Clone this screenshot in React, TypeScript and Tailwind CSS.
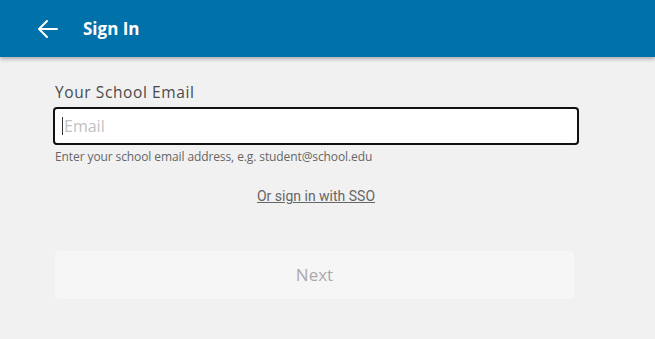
import React from 'react';

const App: React.FC = () => {
  return (
    <div className="w-[655px] h-[339px] bg-[#f1f1f1] overflow-hidden" style={{ fontFamily: '"Open Sans", "Noto Sans", sans-serif' }}>
      {/* Top bar */}
      <div className="h-[57px] bg-[#0071a9] flex items-center shadow-[0_2px_4px_rgba(0,0,0,0.3)] relative z-10">
        <button className="ml-[37px] w-[22px] h-[22px] flex items-center justify-center text-white">
          <svg width="22" height="20" viewBox="0 0 22 20" fill="none" stroke="white" strokeWidth="2" strokeLinecap="round" strokeLinejoin="round">
            <path d="M20 10H3" />
            <path d="M10 2L2 10l8 8" />
          </svg>
        </button>
        <h1 className="ml-[24px] text-white text-[17px] font-bold">Sign In</h1>
      </div>

      {/* Form */}
      <div className="w-[526px] ml-[53px] pt-[26px]">
        <label className="block pl-[2px] text-[15.5px] tracking-[0.6px] text-[#4a4a4a] leading-[18px]">Your School Email</label>
        <div className="mt-[6px] h-[38px] bg-white border-2 border-[#111] rounded-[4px] flex items-center pl-[7px]">
          <span className="w-px h-[18px] bg-[#333]" />
          <input
            className="flex-1 bg-transparent outline-none text-[16px] text-[#333] placeholder-[#c2c2c2] pl-[1px]"
            placeholder="Email"
          />
        </div>
        <p className="mt-[4px] pl-[2px] text-[12px] tracking-[-0.1px] text-[#666] leading-[15px]">
          Enter your school email address, e.g. student@school.edu
        </p>
        <div className="mt-[22px] flex justify-center">
          <a href="#" className="text-[14px] text-[#666] underline" style={{ fontFamily: 'Roboto, sans-serif' }}>
            Or sign in with SSO
          </a>
        </div>
        <button className="mt-[44px] ml-[2px] w-[519px] h-[48px] bg-[#f6f6f6] rounded-[4px] text-[17px] text-[#aaaaaa]">
          Next
        </button>
      </div>
    </div>
  );
};

export default App;
